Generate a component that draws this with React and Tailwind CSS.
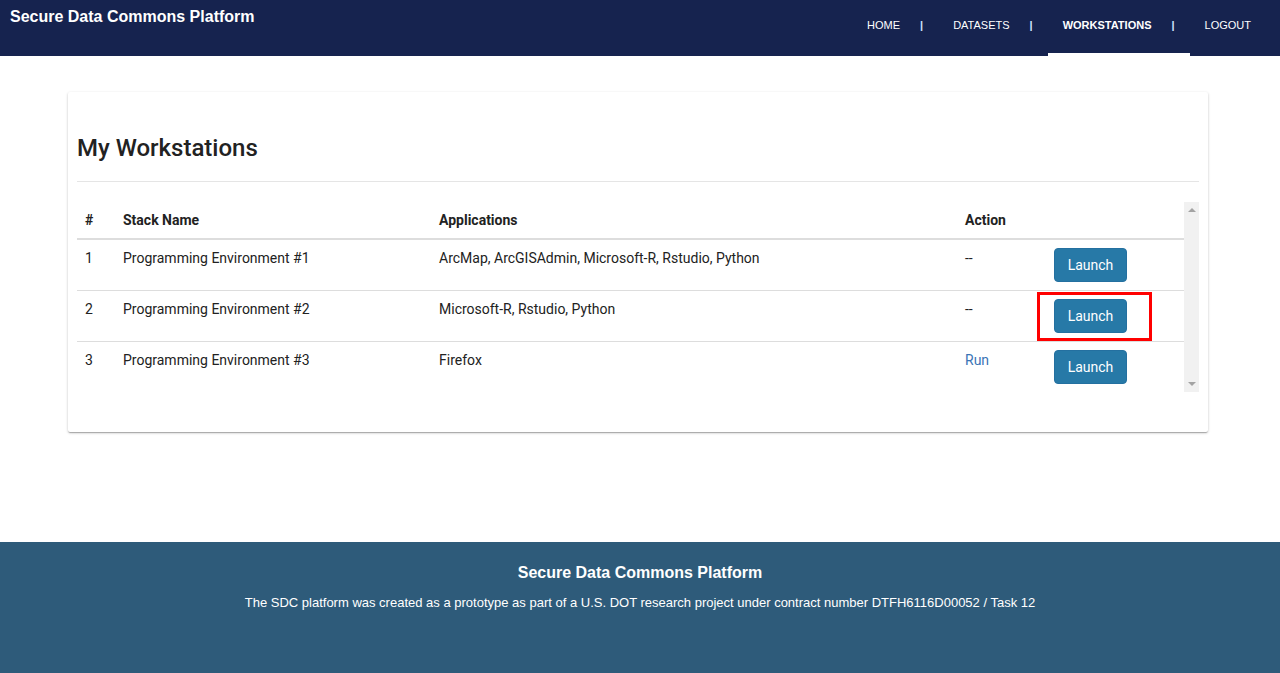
import React from "react";

const rows = [
  { id: 1, name: "Programming Environment #1", apps: "ArcMap, ArcGISAdmin, Microsoft-R, Rstudio, Python", action: "--" },
  { id: 2, name: "Programming Environment #2", apps: "Microsoft-R, Rstudio, Python", action: "--", marked: true },
  { id: 3, name: "Programming Environment #3", apps: "Firefox", action: "Run" },
];

const navItems = [
  { label: "HOME" },
  { label: "DATASETS" },
  { label: "WORKSTATIONS", active: true },
  { label: "LOGOUT", last: true },
];

const Header = () => (
  <header className="h-[56px] bg-[#16234f] flex justify-between font-['Liberation_Sans',Arial,sans-serif]">
    <div className="pl-[10px] pt-[7px] text-[16px] leading-[20px] font-bold text-white">
      Secure Data Commons Platform
    </div>
    <nav className="flex pr-[14px]">
      {navItems.map((item) => (
        <div
          key={item.label}
          className={`flex items-start pt-[19px] px-[15px] h-full border-b-[3px] ${
            item.active ? "border-white font-bold" : "border-transparent"
          }`}
        >
          <span className="text-[11px] leading-[12px] text-white">{item.label}</span>
          {!item.last && (
            <span className="ml-[20px] text-[11px] leading-[12px] text-[#cfe3ff] font-bold">|</span>
          )}
        </div>
      ))}
    </nav>
  </header>
);

const WorkstationTable = () => (
  <div className="flex">
    <div className="flex-1">
      <table className="w-full border-collapse text-[14px] leading-[20px] text-[#222]">
        <thead>
          <tr className="border-b-2 border-[#dddddd]">
            <th className="w-[38px] text-left font-bold px-[8px] py-[8px]">#</th>
            <th className="w-[316px] text-left font-bold px-[8px] py-[8px]">Stack Name</th>
            <th className="w-[526px] text-left font-bold px-[8px] py-[8px]">Applications</th>
            <th className="w-[89px] text-left font-bold px-[8px] py-[8px]">Action</th>
            <th className="px-[8px] py-[8px]"></th>
          </tr>
        </thead>
        <tbody>
          {rows.map((row, i) => (
            <tr key={row.id} className={i < rows.length - 1 ? "border-b border-[#dddddd]" : ""}>
              <td className="align-top px-[8px] pt-[8px]">{row.id}</td>
              <td className="align-top px-[8px] pt-[8px]">{row.name}</td>
              <td className="align-top px-[8px] pt-[8px]">{row.apps}</td>
              <td className="align-top px-[8px] pt-[8px]">
                {row.action === "Run" ? (
                  <a className="text-[#3a74b6]">Run</a>
                ) : (
                  row.action
                )}
              </td>
              <td className="relative align-top px-[8px] py-[8px]">
                <button className="h-[34px] w-[73px] rounded-[4px] bg-[#2779a7] text-white text-[14px] border border-[#2470a0]">
                  Launch
                </button>
                {row.marked && (
                  <div className="absolute left-[-9px] top-[1px] w-[115px] h-[49px] border-[3px] border-[#ff0000]" />
                )}
              </td>
            </tr>
          ))}
        </tbody>
      </table>
    </div>
    <div className="w-[15px] bg-[#f1f1f1] flex flex-col justify-between items-center py-[6px]">
      <div className="w-0 h-0 border-l-[4px] border-r-[4px] border-b-[4px] border-l-transparent border-r-transparent border-b-[#a3a3a3]" />
      <div className="w-0 h-0 border-l-[4px] border-r-[4px] border-t-[4px] border-l-transparent border-r-transparent border-t-[#a3a3a3]" />
    </div>
  </div>
);

const Footer = () => (
  <footer className="h-[131px] bg-[#2e5b7a] text-white text-center font-['Liberation_Sans',Arial,sans-serif] pt-[21px]">
    <h3 className="text-[16px] leading-[20px] font-bold">Secure Data Commons Platform</h3>
    <p className="mt-[10px] text-[13px] leading-[20px]">
      The SDC platform was created as a prototype as part of a U.S. DOT research project under contract number DTFH6116D00052 / Task 12
    </p>
  </footer>
);

const App = () => {
  return (
    <div className="min-h-[673px] bg-white flex flex-col">
      <Header />
      <main className="flex-1 px-[68px] pt-[36px] pb-[110px] font-['Roboto',sans-serif]">
        <div className="w-[1140px] bg-white rounded-[2px] shadow-[0_1px_3px_rgba(0,0,0,0.2),0_1px_1px_rgba(0,0,0,0.14),0_2px_1px_-1px_rgba(0,0,0,0.12)] px-[9px] pt-[40px] pb-[40px]">
          <h2 className="text-[24px] leading-[32px] font-medium text-[#222] pb-[17px] border-b border-[#e5e5e5]">
            My Workstations
          </h2>
          <div className="mt-[20px] w-[1122px]">
            <WorkstationTable />
          </div>
        </div>
      </main>
      <Footer />
    </div>
  );
};

export default App;
